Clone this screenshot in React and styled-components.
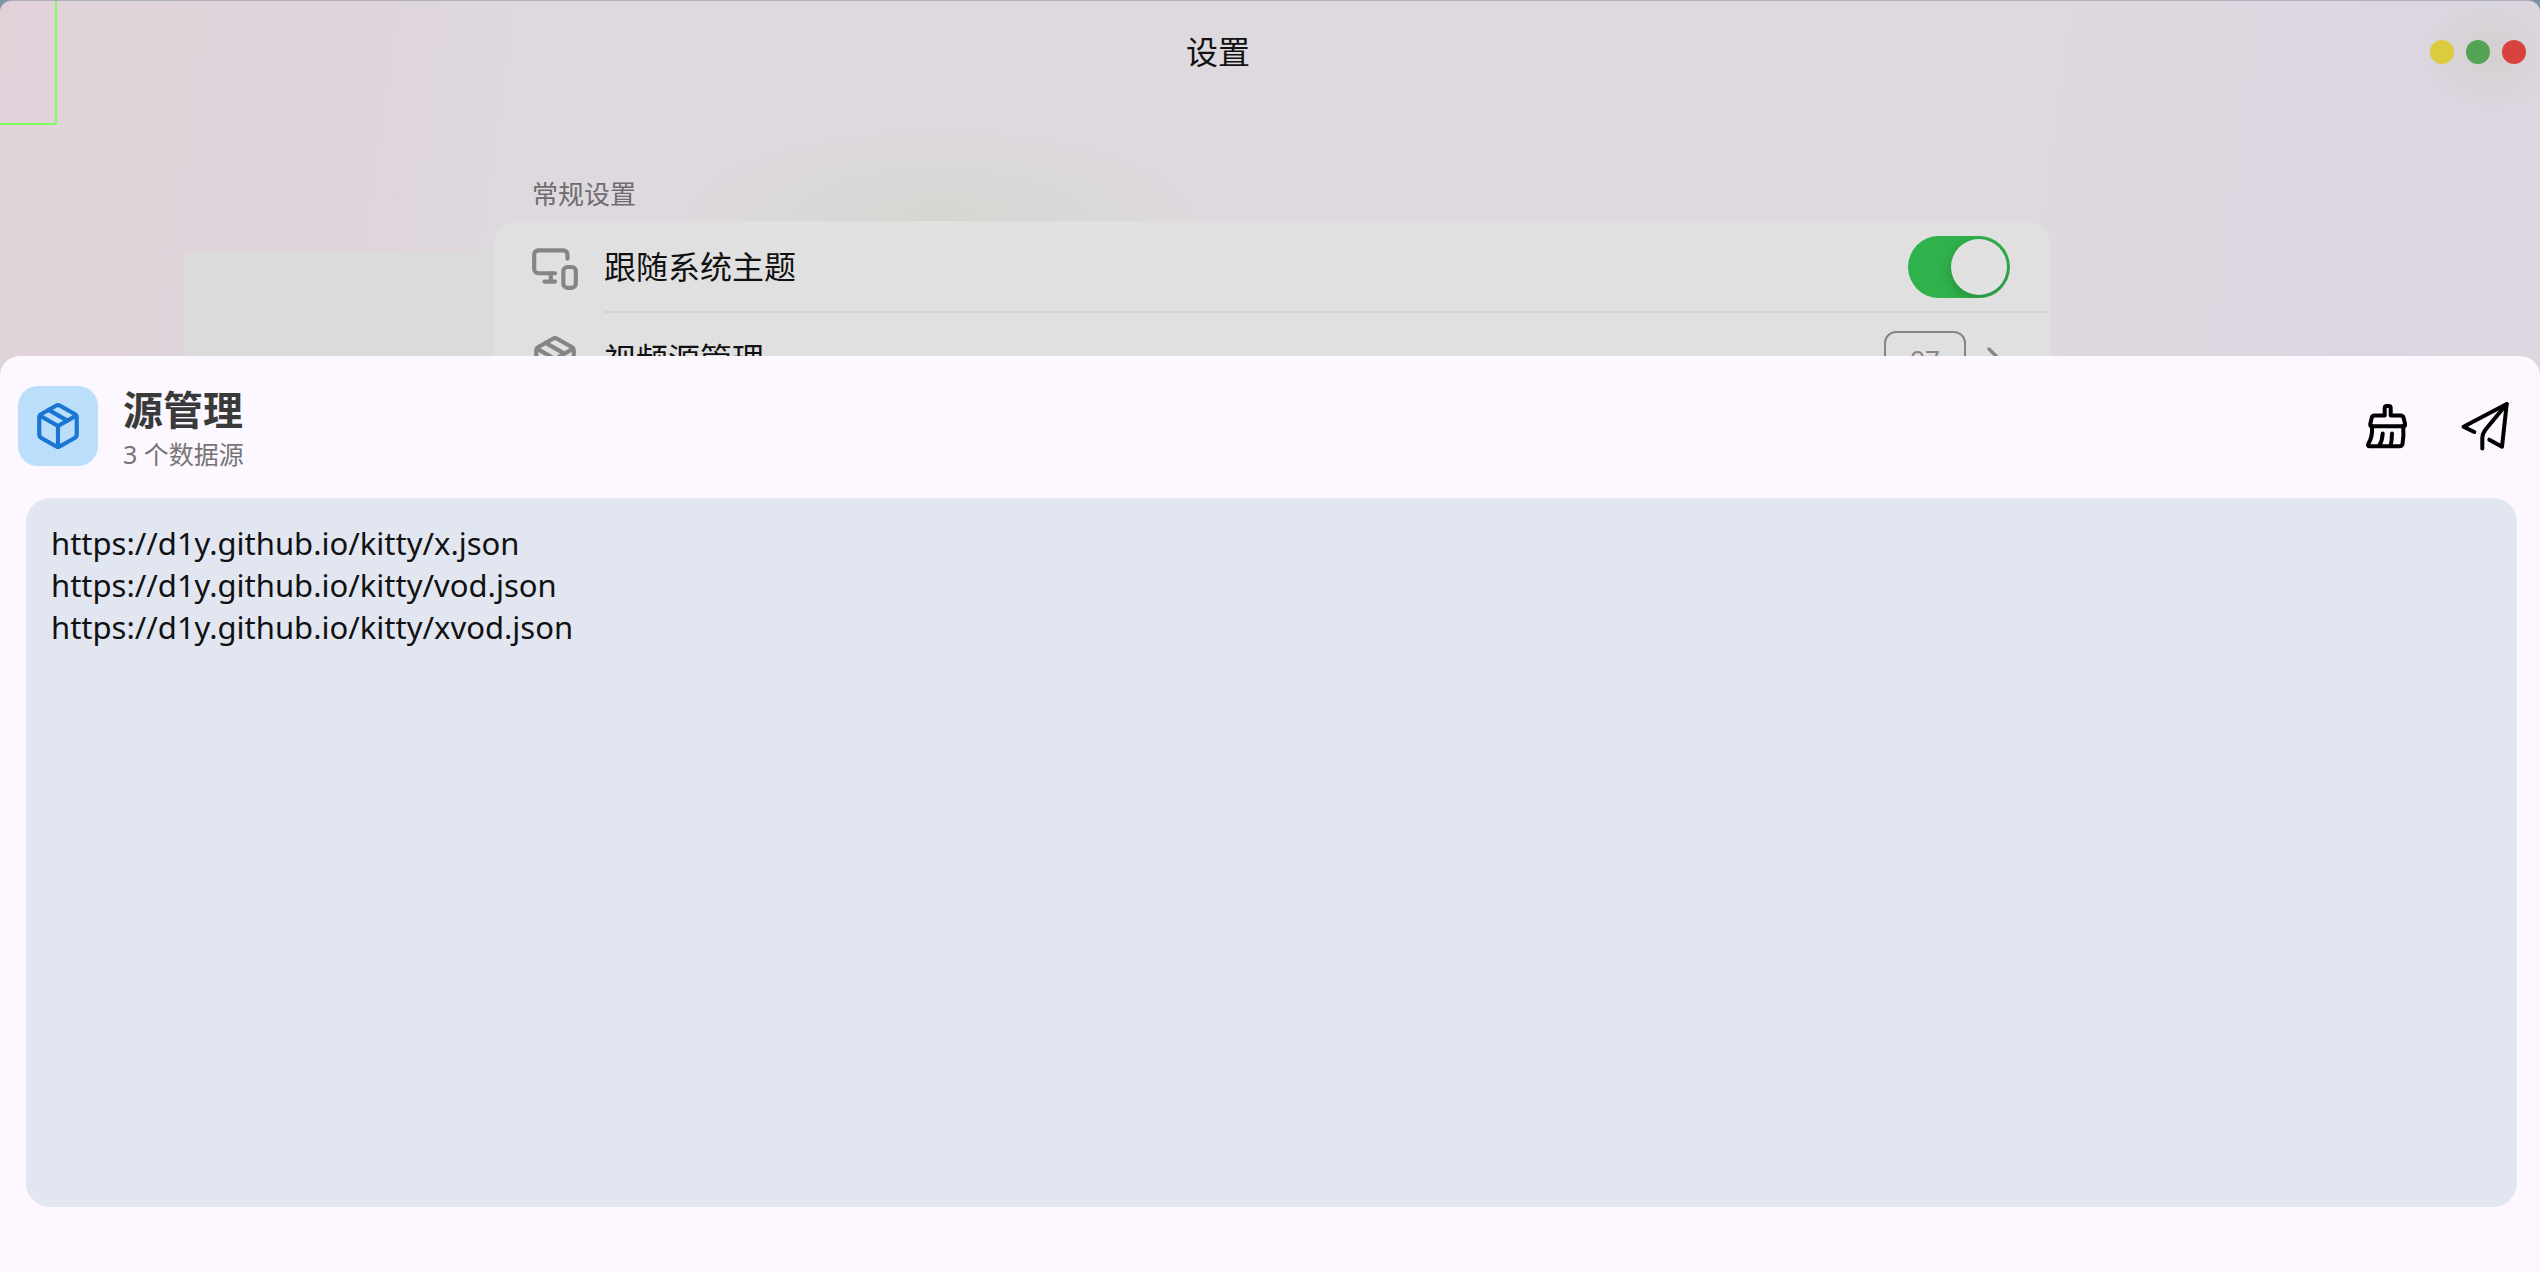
import React, { useState } from 'react';
import styled, { createGlobalStyle } from 'styled-components';
import { MonitorSmartphone, Package, ChevronRight } from 'lucide-react';

const GlobalStyle = createGlobalStyle`
  * { box-sizing: border-box; }
  html, body, #root { height: 100%; }
  body {
    margin: 0;
    background: #7f92a8;
    font-family: 'Noto Sans', 'Noto Sans CJK SC', sans-serif;
    color: #111;
  }
  button { font: inherit; }
`;

const Window = styled.div`
  position: relative;
  height: 100vh;
  min-height: 720px;
  overflow: hidden;
  display: flex;
  flex-direction: column;
  border-top: 1px solid #aeb0bd;
  border-radius: 12px 12px 0 0;
  background:
    radial-gradient(ellipse 70px 60px at calc(100% - 50px) 52px, #d3d0cf 0%, transparent 100%),
    radial-gradient(ellipse 260px 90px at 37% 218px, #d5d6d1 0%, transparent 100%),
    linear-gradient(#dadbda, #dadbda) 184px 251px / 320px 110px no-repeat,
    linear-gradient(98deg, #e0d4d9 0%, #dfd4dc 14%, #ded9de 19%, #ded9de 76%, #dbd6e1 88%, #dcd7df 100%);
`;

const Marker = styled.div`
  position: absolute;
  left: 0;
  top: 0;
  width: 57px;
  height: 124px;
  border: solid #7dff63;
  border-width: 0 2px 2px 0;
  background: rgba(228, 206, 217, 0.5);
`;

const TitleBar = styled.header`
  display: grid;
  grid-template-columns: 1fr auto 1fr;
  align-items: center;
  height: 102px;
  padding-right: 14px;
`;

const WindowTitle = styled.h1`
  grid-column: 2;
  margin: 0 90px 0 0;
  font-size: 32px;
  font-weight: 400;
  line-height: 40px;
`;

const WindowButtons = styled.div`
  grid-column: 3;
  justify-self: end;
  display: flex;
  gap: 12px;
`;

const WindowButton = styled.button`
  width: 24px;
  height: 24px;
  padding: 0;
  border: 0;
  border-radius: 50%;
  background: ${(p) => p.$color};
`;

const Settings = styled.main`
  width: 1560px;
  max-width: 100%;
  margin: 74px auto 0;
  padding-left: 4px;
`;

const GroupLabel = styled.h2`
  margin: 0 0 10px;
  padding-left: 38px;
  font-size: 26px;
  font-weight: 400;
  line-height: 34px;
  color: #6f6b71;
`;

const Group = styled.section`
  border-radius: 24px;
  background: #e0e0e0;
`;

const Row = styled.div`
  display: flex;
  align-items: center;
  padding-left: 36px;
  gap: 24px;
  color: #858585;
`;

const RowBody = styled.div`
  flex: 1;
  display: flex;
  align-items: center;
  justify-content: space-between;
  height: 92px;
  padding-right: 40px;
  box-shadow: inset 0 -2px #d3d3d3;
`;

const RowLabel = styled.label`
  font-size: 32px;
  line-height: 40px;
  color: #111;
`;

const Switch = styled.input`
  appearance: none;
  width: 102px;
  height: 62px;
  margin: 0;
  padding: 3px;
  overflow: hidden;
  border-radius: 31px;
  background: ${(p) => (p.checked ? '#2fb14b' : '#bdbdbd')};
  display: flex;
  justify-content: ${(p) => (p.checked ? 'flex-end' : 'flex-start')};

  &::before {
    content: '';
    width: 56px;
    height: 56px;
    border-radius: 50%;
    background: #e1e1e1;
    box-shadow: 0 4px 12px rgba(0, 0, 0, 0.2);
  }
`;

const RowLink = styled.button`
  display: flex;
  align-items: center;
  gap: 8px;
  margin-right: -4px;
  padding: 0;
  border: 0;
  background: none;
  color: #858585;
`;

const Badge = styled.span`
  width: 82px;
  height: 56px;
  border: 2px solid #858585;
  border-radius: 12px;
  font-size: 26px;
  line-height: 52px;
  text-align: center;
`;

const Sheet = styled.section`
  position: absolute;
  inset: 355px 0 0;
  display: flex;
  flex-direction: column;
  border-radius: 20px 20px 0 0;
  background: #fdf7ff;
`;

const SheetHeader = styled.header`
  display: flex;
  align-items: center;
  height: 140px;
  padding: 0 30px 0 18px;
`;

const Tile = styled.div`
  display: grid;
  place-items: center;
  width: 80px;
  height: 80px;
  border-radius: 20px;
  background: #bbdefb;
  color: #1976d2;
`;

const Heading = styled.div`
  flex: 1;
  padding: 4px 0 0 25px;
`;

const SheetTitle = styled.h2`
  margin: 0;
  font-size: 40px;
  font-weight: 700;
  line-height: 52px;
  color: #3a3a3a;
`;

const SheetSubtitle = styled.p`
  margin: 0;
  font-size: 25px;
  line-height: 36px;
  color: #757575;
`;

const Actions = styled.div`
  display: flex;
  gap: 48px;
`;

const IconButton = styled.button`
  display: flex;
  padding: 0;
  border: 0;
  background: none;
  color: #000;
`;

const Sources = styled.textarea`
  flex: 1;
  margin: 2px 23px 65px 26px;
  padding: 24px 25px;
  border: 0;
  outline: 0;
  resize: none;
  border-radius: 24px;
  background: #e2e6f1;
  color: #111;
  font-family: 'Noto Sans', 'Noto Sans CJK SC', sans-serif;
  font-size: 31px;
  line-height: 42px;
`;

function BroomIcon() {
  return (
    <svg width="50" height="50" viewBox="0 0 50 50" fill="none" stroke="currentColor" strokeWidth="4" strokeLinecap="round" strokeLinejoin="round" aria-hidden="true">
      <path d="M22.700 14.500V7q0-2 2-2h2q2 0 2 2v7.500h10q2.300 0 2.800 2l1.500 6.300q.5 2.500-1.500 2.500H9.800q-2 0-1.500-2.500l1.500-6.300q.5-2 2.800-2z" />
      <path d="M10 25.300q.8 10.500-3.700 17.500-1 2.500 1.500 2.500H37.500q2.500 0 3-2.500 1.500-8 .7-17.500M17 45q3.500-5.500 3.700-12.500M28.500 45q1.500-5.500 1.500-12.500" />
    </svg>
  );
}

function PlaneIcon() {
  return (
    <svg width="50" height="50" viewBox="0 0 50 50" fill="none" stroke="currentColor" strokeWidth="4" strokeLinecap="round" strokeLinejoin="round" aria-hidden="true">
      <path d="M14.300 31 3.500 25.700 46.700 3 42 45.700 29.300 38.700" />
      <path d="M46.700 3 26 28q-3.700 4.500-3.700 9V47.500" />
    </svg>
  );
}

const initialSources = [
  'https://d1y.github.io/kitty/x.json',
  'https://d1y.github.io/kitty/vod.json',
  'https://d1y.github.io/kitty/xvod.json',
].join('\n');

export default function App() {
  const [followSystem, setFollowSystem] = useState(true);
  const [sources, setSources] = useState(initialSources);

  return (
    <>
      <GlobalStyle />
      <Window>
        <Marker />
        <TitleBar>
          <WindowTitle>设置</WindowTitle>
          <WindowButtons>
            <WindowButton $color="#dccb3f" aria-label="最小化" />
            <WindowButton $color="#54a253" aria-label="最大化" />
            <WindowButton $color="#d9433f" aria-label="关闭" />
          </WindowButtons>
        </TitleBar>
        <Settings>
          <GroupLabel>常规设置</GroupLabel>
          <Group>
            <Row>
              <MonitorSmartphone size={50} />
              <RowBody>
                <RowLabel htmlFor="follow-system">跟随系统主题</RowLabel>
                <Switch
                  id="follow-system"
                  type="checkbox"
                  role="switch"
                  checked={followSystem}
                  onChange={(e) => setFollowSystem(e.target.checked)}
                />
              </RowBody>
            </Row>
            <Row>
              <Package size={50} />
              <RowBody>
                <RowLabel htmlFor="manage-sources">视频源管理</RowLabel>
                <RowLink id="manage-sources">
                  <Badge>97</Badge>
                  <ChevronRight size={40} />
                </RowLink>
              </RowBody>
            </Row>
          </Group>
        </Settings>
        <Sheet>
          <SheetHeader>
            <Tile>
              <Package size={50} />
            </Tile>
            <Heading>
              <SheetTitle id="sheet-title">源管理</SheetTitle>
              <SheetSubtitle>3 个数据源</SheetSubtitle>
            </Heading>
            <Actions>
              <IconButton aria-label="清空">
                <BroomIcon />
              </IconButton>
              <IconButton aria-label="提交">
                <PlaneIcon />
              </IconButton>
            </Actions>
          </SheetHeader>
          <Sources
            aria-labelledby="sheet-title"
            spellCheck={false}
            value={sources}
            onChange={(e) => setSources(e.target.value)}
          />
        </Sheet>
      </Window>
    </>
  );
}
